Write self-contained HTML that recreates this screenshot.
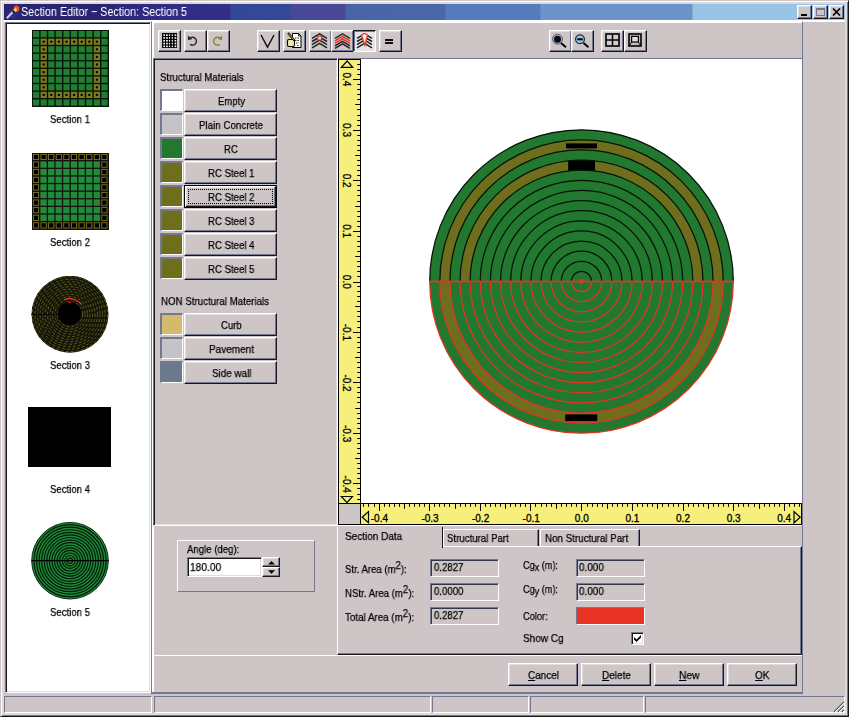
<!DOCTYPE html><html><head><meta charset="utf-8"><title>Section Editor</title><style>
*{box-sizing:border-box;margin:0;padding:0}
html,body{width:850px;height:717px;overflow:hidden;background:#cec5c7}
body{position:relative;font-family:"Liberation Sans",sans-serif;font-size:11px;color:#000;line-height:13px}
.a{position:absolute}
.t{position:absolute;white-space:nowrap;font-size:11px;line-height:13px;transform-origin:0 0;will-change:transform;-webkit-text-stroke:0.25px #000}
.btn{position:absolute;background:#cec5c7;border:1px solid;border-color:#ffffff #16161e #16161e #ffffff;box-shadow:inset -1px -1px 0 #737890, inset 1px 1px 0 #e2dcdd}
.tb{position:absolute;width:23px;height:22px;background:#cec5c7;border:1px solid;border-color:#ffffff #16161e #16161e #ffffff;box-shadow:inset -1px -1px 0 #737890, inset 1px 1px 0 #e2dcdd}
.sunk{position:absolute;border:1px solid;border-color:#737890 #ffffff #ffffff #737890;box-shadow:inset 1px 1px 0 #16161e, inset -1px -1px 0 #e2dcdd}
.sw{position:absolute;width:23px;height:22px;border-style:solid;border-width:2px 1px 1px 2px;border-color:#737890 #ffffff #ffffff #737890}
.fld{position:absolute;height:18px;border:1px solid;border-color:#737890 #ffffff #ffffff #737890;box-shadow:inset 1px 1px 0 #34364a;background:#cec5c7}
.sb{position:absolute;top:696px;height:17px;border:1px solid;border-color:#737890 #ffffff #ffffff #737890}
u{text-decoration:underline}
sup{font-size:11px;vertical-align:baseline;position:relative;top:-4px}
</style></head><body>
<div class="a" style="left:0;top:0;width:849px;height:717px;border:1px solid;border-color:#cec5c7 #16161e #16161e #cec5c7;box-shadow:inset 1px 1px 0 #ffffff, inset -1px -1px 0 #737890"></div><div class="a" style="left:849px;top:0;width:1px;height:717px;background:#fff"></div>
<div class="a" style="left:2px;top:2px;width:845px;height:713px;border:2px solid #dedad9"></div>
<div class="a" style="left:4px;top:20px;width:841px;height:2px;background:#fff"></div>
<div class="a" style="left:4px;top:4px;width:841px;height:16px;background:linear-gradient(90deg,#2a2470 0px,#2a2470 96px,#302c84 150px,#332f88 226px,#324896 227px,#344a98 286px,#484896 287px,#484896 341px,#4864a5 342px,#4a68a8 441px,#527cbc 442px,#527cbc 536px,#6c94cc 537px,#6c94cc 688px,#98c4e8 689px,#98c4e8 841px)"></div>
<svg class="a" style="left:5px;top:4px" width="16" height="16" viewBox="0 0 16 16"><path d="M3 9 L8 4 L14 9 L9 15 L4 14Z" fill="#2a2c90"/><path d="M1.8 14.2 L7.8 8" stroke="#c8c8d0" stroke-width="2.3"/><path d="M8 8.6 L9.5 7" stroke="#101018" stroke-width="2.3"/><path d="M8.2 6.5 L9 3 L11.5 0.8 L12 2.8 L13.6 2 L14.4 5 L13 7.5 L10.5 8.2Z" fill="#f05a28"/><path d="M9 6.3 L10 4 L11.8 5 L11.2 7.2 L9.8 7.5Z" fill="#ffd830"/></svg>
<div class="t" style="left:21px;top:4px;transform:scaleX(0.8609);color:#fff;font-size:12.5px;line-height:16px;-webkit-text-stroke:0">Section Editor − Section: Section 5</div>
<div class="btn" style="left:797px;top:5px;width:15px;height:14px"></div>
<div class="btn" style="left:813px;top:5px;width:15px;height:14px"></div>
<div class="btn" style="left:829px;top:5px;width:15px;height:14px"></div>
<div class="a" style="left:801px;top:14px;width:6px;height:2px;background:#000"></div>
<div class="a" style="left:816px;top:8px;width:9px;height:8px;border:1px solid #737890;border-top-width:2px"></div>
<svg class="a" style="left:832px;top:8px" width="9" height="8" viewBox="0 0 9 8"><path d="M1 0.5 L8 7.5 M8 0.5 L1 7.5" stroke="#000" stroke-width="1.6"/></svg>
<div class="sunk" style="left:5px;top:22px;width:146px;height:671px;background:#fff"></div>
<svg class="a" style="left:31.5px;top:29.5px" width="77" height="77" viewBox="0 0 78 78"><rect width="78" height="78" fill="#07140a"/><rect x="1.0" y="1.0" width="6.3" height="6.3" fill="#227c32"/><rect x="8.7" y="1.0" width="6.3" height="6.3" fill="#227c32"/><rect x="16.4" y="1.0" width="6.3" height="6.3" fill="#227c32"/><rect x="24.1" y="1.0" width="6.3" height="6.3" fill="#227c32"/><rect x="31.8" y="1.0" width="6.3" height="6.3" fill="#227c32"/><rect x="39.5" y="1.0" width="6.3" height="6.3" fill="#227c32"/><rect x="47.2" y="1.0" width="6.3" height="6.3" fill="#227c32"/><rect x="54.9" y="1.0" width="6.3" height="6.3" fill="#227c32"/><rect x="62.6" y="1.0" width="6.3" height="6.3" fill="#227c32"/><rect x="70.3" y="1.0" width="6.3" height="6.3" fill="#227c32"/><rect x="1.0" y="8.7" width="6.3" height="6.3" fill="#227c32"/><rect x="8.7" y="8.7" width="6.3" height="6.3" fill="#7d7a1e"/><rect x="10.8" y="10.8" width="2.1" height="2.1" fill="#000"/><rect x="16.4" y="8.7" width="6.3" height="6.3" fill="#7d7a1e"/><rect x="18.5" y="10.8" width="2.1" height="2.1" fill="#000"/><rect x="24.1" y="8.7" width="6.3" height="6.3" fill="#7d7a1e"/><rect x="26.2" y="10.8" width="2.1" height="2.1" fill="#000"/><rect x="31.8" y="8.7" width="6.3" height="6.3" fill="#7d7a1e"/><rect x="33.9" y="10.8" width="2.1" height="2.1" fill="#000"/><rect x="39.5" y="8.7" width="6.3" height="6.3" fill="#7d7a1e"/><rect x="41.6" y="10.8" width="2.1" height="2.1" fill="#000"/><rect x="47.2" y="8.7" width="6.3" height="6.3" fill="#7d7a1e"/><rect x="49.3" y="10.8" width="2.1" height="2.1" fill="#000"/><rect x="54.9" y="8.7" width="6.3" height="6.3" fill="#7d7a1e"/><rect x="57.0" y="10.8" width="2.1" height="2.1" fill="#000"/><rect x="62.6" y="8.7" width="6.3" height="6.3" fill="#7d7a1e"/><rect x="64.7" y="10.8" width="2.1" height="2.1" fill="#000"/><rect x="70.3" y="8.7" width="6.3" height="6.3" fill="#227c32"/><rect x="1.0" y="16.4" width="6.3" height="6.3" fill="#227c32"/><rect x="8.7" y="16.4" width="6.3" height="6.3" fill="#7d7a1e"/><rect x="10.8" y="18.5" width="2.1" height="2.1" fill="#000"/><rect x="16.4" y="16.4" width="6.3" height="6.3" fill="#227c32"/><rect x="24.1" y="16.4" width="6.3" height="6.3" fill="#227c32"/><rect x="31.8" y="16.4" width="6.3" height="6.3" fill="#227c32"/><rect x="39.5" y="16.4" width="6.3" height="6.3" fill="#227c32"/><rect x="47.2" y="16.4" width="6.3" height="6.3" fill="#227c32"/><rect x="54.9" y="16.4" width="6.3" height="6.3" fill="#227c32"/><rect x="62.6" y="16.4" width="6.3" height="6.3" fill="#7d7a1e"/><rect x="64.7" y="18.5" width="2.1" height="2.1" fill="#000"/><rect x="70.3" y="16.4" width="6.3" height="6.3" fill="#227c32"/><rect x="1.0" y="24.1" width="6.3" height="6.3" fill="#227c32"/><rect x="8.7" y="24.1" width="6.3" height="6.3" fill="#7d7a1e"/><rect x="10.8" y="26.2" width="2.1" height="2.1" fill="#000"/><rect x="16.4" y="24.1" width="6.3" height="6.3" fill="#227c32"/><rect x="24.1" y="24.1" width="6.3" height="6.3" fill="#227c32"/><rect x="31.8" y="24.1" width="6.3" height="6.3" fill="#227c32"/><rect x="39.5" y="24.1" width="6.3" height="6.3" fill="#227c32"/><rect x="47.2" y="24.1" width="6.3" height="6.3" fill="#227c32"/><rect x="54.9" y="24.1" width="6.3" height="6.3" fill="#227c32"/><rect x="62.6" y="24.1" width="6.3" height="6.3" fill="#7d7a1e"/><rect x="64.7" y="26.2" width="2.1" height="2.1" fill="#000"/><rect x="70.3" y="24.1" width="6.3" height="6.3" fill="#227c32"/><rect x="1.0" y="31.8" width="6.3" height="6.3" fill="#227c32"/><rect x="8.7" y="31.8" width="6.3" height="6.3" fill="#7d7a1e"/><rect x="10.8" y="33.9" width="2.1" height="2.1" fill="#000"/><rect x="16.4" y="31.8" width="6.3" height="6.3" fill="#227c32"/><rect x="24.1" y="31.8" width="6.3" height="6.3" fill="#227c32"/><rect x="31.8" y="31.8" width="6.3" height="6.3" fill="#227c32"/><rect x="39.5" y="31.8" width="6.3" height="6.3" fill="#227c32"/><rect x="47.2" y="31.8" width="6.3" height="6.3" fill="#227c32"/><rect x="54.9" y="31.8" width="6.3" height="6.3" fill="#227c32"/><rect x="62.6" y="31.8" width="6.3" height="6.3" fill="#7d7a1e"/><rect x="64.7" y="33.9" width="2.1" height="2.1" fill="#000"/><rect x="70.3" y="31.8" width="6.3" height="6.3" fill="#227c32"/><rect x="1.0" y="39.5" width="6.3" height="6.3" fill="#227c32"/><rect x="8.7" y="39.5" width="6.3" height="6.3" fill="#7d7a1e"/><rect x="10.8" y="41.6" width="2.1" height="2.1" fill="#000"/><rect x="16.4" y="39.5" width="6.3" height="6.3" fill="#227c32"/><rect x="24.1" y="39.5" width="6.3" height="6.3" fill="#227c32"/><rect x="31.8" y="39.5" width="6.3" height="6.3" fill="#227c32"/><rect x="39.5" y="39.5" width="6.3" height="6.3" fill="#227c32"/><rect x="47.2" y="39.5" width="6.3" height="6.3" fill="#227c32"/><rect x="54.9" y="39.5" width="6.3" height="6.3" fill="#227c32"/><rect x="62.6" y="39.5" width="6.3" height="6.3" fill="#7d7a1e"/><rect x="64.7" y="41.6" width="2.1" height="2.1" fill="#000"/><rect x="70.3" y="39.5" width="6.3" height="6.3" fill="#227c32"/><rect x="1.0" y="47.2" width="6.3" height="6.3" fill="#227c32"/><rect x="8.7" y="47.2" width="6.3" height="6.3" fill="#7d7a1e"/><rect x="10.8" y="49.3" width="2.1" height="2.1" fill="#000"/><rect x="16.4" y="47.2" width="6.3" height="6.3" fill="#227c32"/><rect x="24.1" y="47.2" width="6.3" height="6.3" fill="#227c32"/><rect x="31.8" y="47.2" width="6.3" height="6.3" fill="#227c32"/><rect x="39.5" y="47.2" width="6.3" height="6.3" fill="#227c32"/><rect x="47.2" y="47.2" width="6.3" height="6.3" fill="#227c32"/><rect x="54.9" y="47.2" width="6.3" height="6.3" fill="#227c32"/><rect x="62.6" y="47.2" width="6.3" height="6.3" fill="#7d7a1e"/><rect x="64.7" y="49.3" width="2.1" height="2.1" fill="#000"/><rect x="70.3" y="47.2" width="6.3" height="6.3" fill="#227c32"/><rect x="1.0" y="54.9" width="6.3" height="6.3" fill="#227c32"/><rect x="8.7" y="54.9" width="6.3" height="6.3" fill="#7d7a1e"/><rect x="10.8" y="57.0" width="2.1" height="2.1" fill="#000"/><rect x="16.4" y="54.9" width="6.3" height="6.3" fill="#227c32"/><rect x="24.1" y="54.9" width="6.3" height="6.3" fill="#227c32"/><rect x="31.8" y="54.9" width="6.3" height="6.3" fill="#227c32"/><rect x="39.5" y="54.9" width="6.3" height="6.3" fill="#227c32"/><rect x="47.2" y="54.9" width="6.3" height="6.3" fill="#227c32"/><rect x="54.9" y="54.9" width="6.3" height="6.3" fill="#227c32"/><rect x="62.6" y="54.9" width="6.3" height="6.3" fill="#7d7a1e"/><rect x="64.7" y="57.0" width="2.1" height="2.1" fill="#000"/><rect x="70.3" y="54.9" width="6.3" height="6.3" fill="#227c32"/><rect x="1.0" y="62.6" width="6.3" height="6.3" fill="#227c32"/><rect x="8.7" y="62.6" width="6.3" height="6.3" fill="#7d7a1e"/><rect x="10.8" y="64.7" width="2.1" height="2.1" fill="#000"/><rect x="16.4" y="62.6" width="6.3" height="6.3" fill="#7d7a1e"/><rect x="18.5" y="64.7" width="2.1" height="2.1" fill="#000"/><rect x="24.1" y="62.6" width="6.3" height="6.3" fill="#7d7a1e"/><rect x="26.2" y="64.7" width="2.1" height="2.1" fill="#000"/><rect x="31.8" y="62.6" width="6.3" height="6.3" fill="#7d7a1e"/><rect x="33.9" y="64.7" width="2.1" height="2.1" fill="#000"/><rect x="39.5" y="62.6" width="6.3" height="6.3" fill="#7d7a1e"/><rect x="41.6" y="64.7" width="2.1" height="2.1" fill="#000"/><rect x="47.2" y="62.6" width="6.3" height="6.3" fill="#7d7a1e"/><rect x="49.3" y="64.7" width="2.1" height="2.1" fill="#000"/><rect x="54.9" y="62.6" width="6.3" height="6.3" fill="#7d7a1e"/><rect x="57.0" y="64.7" width="2.1" height="2.1" fill="#000"/><rect x="62.6" y="62.6" width="6.3" height="6.3" fill="#7d7a1e"/><rect x="64.7" y="64.7" width="2.1" height="2.1" fill="#000"/><rect x="70.3" y="62.6" width="6.3" height="6.3" fill="#227c32"/><rect x="1.0" y="70.3" width="6.3" height="6.3" fill="#227c32"/><rect x="8.7" y="70.3" width="6.3" height="6.3" fill="#227c32"/><rect x="16.4" y="70.3" width="6.3" height="6.3" fill="#227c32"/><rect x="24.1" y="70.3" width="6.3" height="6.3" fill="#227c32"/><rect x="31.8" y="70.3" width="6.3" height="6.3" fill="#227c32"/><rect x="39.5" y="70.3" width="6.3" height="6.3" fill="#227c32"/><rect x="47.2" y="70.3" width="6.3" height="6.3" fill="#227c32"/><rect x="54.9" y="70.3" width="6.3" height="6.3" fill="#227c32"/><rect x="62.6" y="70.3" width="6.3" height="6.3" fill="#227c32"/><rect x="70.3" y="70.3" width="6.3" height="6.3" fill="#227c32"/></svg>
<svg class="a" style="left:31.5px;top:153px" width="77" height="77" viewBox="0 0 78 78"><rect width="78" height="78" fill="#15130a"/><rect x="1.4" y="1.4" width="5.3" height="5.3" fill="#000" stroke="#8c8426" stroke-width="0.8"/><rect x="9.1" y="1.4" width="5.3" height="5.3" fill="#000" stroke="#8c8426" stroke-width="0.8"/><rect x="16.8" y="1.4" width="5.3" height="5.3" fill="#000" stroke="#8c8426" stroke-width="0.8"/><rect x="24.5" y="1.4" width="5.3" height="5.3" fill="#000" stroke="#8c8426" stroke-width="0.8"/><rect x="32.2" y="1.4" width="5.3" height="5.3" fill="#000" stroke="#8c8426" stroke-width="0.8"/><rect x="39.9" y="1.4" width="5.3" height="5.3" fill="#000" stroke="#8c8426" stroke-width="0.8"/><rect x="47.6" y="1.4" width="5.3" height="5.3" fill="#000" stroke="#8c8426" stroke-width="0.8"/><rect x="55.3" y="1.4" width="5.3" height="5.3" fill="#000" stroke="#8c8426" stroke-width="0.8"/><rect x="63.0" y="1.4" width="5.3" height="5.3" fill="#000" stroke="#8c8426" stroke-width="0.8"/><rect x="70.7" y="1.4" width="5.3" height="5.3" fill="#000" stroke="#8c8426" stroke-width="0.8"/><rect x="1.4" y="9.1" width="5.3" height="5.3" fill="#000" stroke="#8c8426" stroke-width="0.8"/><rect x="8.5" y="8.5" width="6.4" height="6.4" fill="#228a3c"/><rect x="16.2" y="8.5" width="6.4" height="6.4" fill="#228a3c"/><rect x="23.9" y="8.5" width="6.4" height="6.4" fill="#228a3c"/><rect x="31.6" y="8.5" width="6.4" height="6.4" fill="#228a3c"/><rect x="39.3" y="8.5" width="6.4" height="6.4" fill="#228a3c"/><rect x="47.0" y="8.5" width="6.4" height="6.4" fill="#228a3c"/><rect x="54.7" y="8.5" width="6.4" height="6.4" fill="#228a3c"/><rect x="62.4" y="8.5" width="6.4" height="6.4" fill="#228a3c"/><rect x="70.7" y="9.1" width="5.3" height="5.3" fill="#000" stroke="#8c8426" stroke-width="0.8"/><rect x="1.4" y="16.8" width="5.3" height="5.3" fill="#000" stroke="#8c8426" stroke-width="0.8"/><rect x="8.5" y="16.2" width="6.4" height="6.4" fill="#228a3c"/><rect x="16.2" y="16.2" width="6.4" height="6.4" fill="#228a3c"/><rect x="23.9" y="16.2" width="6.4" height="6.4" fill="#228a3c"/><rect x="31.6" y="16.2" width="6.4" height="6.4" fill="#228a3c"/><rect x="39.3" y="16.2" width="6.4" height="6.4" fill="#228a3c"/><rect x="47.0" y="16.2" width="6.4" height="6.4" fill="#228a3c"/><rect x="54.7" y="16.2" width="6.4" height="6.4" fill="#228a3c"/><rect x="62.4" y="16.2" width="6.4" height="6.4" fill="#228a3c"/><rect x="70.7" y="16.8" width="5.3" height="5.3" fill="#000" stroke="#8c8426" stroke-width="0.8"/><rect x="1.4" y="24.5" width="5.3" height="5.3" fill="#000" stroke="#8c8426" stroke-width="0.8"/><rect x="8.5" y="23.9" width="6.4" height="6.4" fill="#228a3c"/><rect x="16.2" y="23.9" width="6.4" height="6.4" fill="#228a3c"/><rect x="23.9" y="23.9" width="6.4" height="6.4" fill="#228a3c"/><rect x="31.6" y="23.9" width="6.4" height="6.4" fill="#228a3c"/><rect x="39.3" y="23.9" width="6.4" height="6.4" fill="#228a3c"/><rect x="47.0" y="23.9" width="6.4" height="6.4" fill="#228a3c"/><rect x="54.7" y="23.9" width="6.4" height="6.4" fill="#228a3c"/><rect x="62.4" y="23.9" width="6.4" height="6.4" fill="#228a3c"/><rect x="70.7" y="24.5" width="5.3" height="5.3" fill="#000" stroke="#8c8426" stroke-width="0.8"/><rect x="1.4" y="32.2" width="5.3" height="5.3" fill="#000" stroke="#8c8426" stroke-width="0.8"/><rect x="8.5" y="31.6" width="6.4" height="6.4" fill="#228a3c"/><rect x="16.2" y="31.6" width="6.4" height="6.4" fill="#228a3c"/><rect x="23.9" y="31.6" width="6.4" height="6.4" fill="#228a3c"/><rect x="31.6" y="31.6" width="6.4" height="6.4" fill="#228a3c"/><rect x="39.3" y="31.6" width="6.4" height="6.4" fill="#228a3c"/><rect x="47.0" y="31.6" width="6.4" height="6.4" fill="#228a3c"/><rect x="54.7" y="31.6" width="6.4" height="6.4" fill="#228a3c"/><rect x="62.4" y="31.6" width="6.4" height="6.4" fill="#228a3c"/><rect x="70.7" y="32.2" width="5.3" height="5.3" fill="#000" stroke="#8c8426" stroke-width="0.8"/><rect x="1.4" y="39.9" width="5.3" height="5.3" fill="#000" stroke="#8c8426" stroke-width="0.8"/><rect x="8.5" y="39.3" width="6.4" height="6.4" fill="#228a3c"/><rect x="16.2" y="39.3" width="6.4" height="6.4" fill="#228a3c"/><rect x="23.9" y="39.3" width="6.4" height="6.4" fill="#228a3c"/><rect x="31.6" y="39.3" width="6.4" height="6.4" fill="#228a3c"/><rect x="39.3" y="39.3" width="6.4" height="6.4" fill="#228a3c"/><rect x="47.0" y="39.3" width="6.4" height="6.4" fill="#228a3c"/><rect x="54.7" y="39.3" width="6.4" height="6.4" fill="#228a3c"/><rect x="62.4" y="39.3" width="6.4" height="6.4" fill="#228a3c"/><rect x="70.7" y="39.9" width="5.3" height="5.3" fill="#000" stroke="#8c8426" stroke-width="0.8"/><rect x="1.4" y="47.6" width="5.3" height="5.3" fill="#000" stroke="#8c8426" stroke-width="0.8"/><rect x="8.5" y="47.0" width="6.4" height="6.4" fill="#228a3c"/><rect x="16.2" y="47.0" width="6.4" height="6.4" fill="#228a3c"/><rect x="23.9" y="47.0" width="6.4" height="6.4" fill="#228a3c"/><rect x="31.6" y="47.0" width="6.4" height="6.4" fill="#228a3c"/><rect x="39.3" y="47.0" width="6.4" height="6.4" fill="#228a3c"/><rect x="47.0" y="47.0" width="6.4" height="6.4" fill="#228a3c"/><rect x="54.7" y="47.0" width="6.4" height="6.4" fill="#228a3c"/><rect x="62.4" y="47.0" width="6.4" height="6.4" fill="#228a3c"/><rect x="70.7" y="47.6" width="5.3" height="5.3" fill="#000" stroke="#8c8426" stroke-width="0.8"/><rect x="1.4" y="55.3" width="5.3" height="5.3" fill="#000" stroke="#8c8426" stroke-width="0.8"/><rect x="8.5" y="54.7" width="6.4" height="6.4" fill="#228a3c"/><rect x="16.2" y="54.7" width="6.4" height="6.4" fill="#228a3c"/><rect x="23.9" y="54.7" width="6.4" height="6.4" fill="#228a3c"/><rect x="31.6" y="54.7" width="6.4" height="6.4" fill="#228a3c"/><rect x="39.3" y="54.7" width="6.4" height="6.4" fill="#228a3c"/><rect x="47.0" y="54.7" width="6.4" height="6.4" fill="#228a3c"/><rect x="54.7" y="54.7" width="6.4" height="6.4" fill="#228a3c"/><rect x="62.4" y="54.7" width="6.4" height="6.4" fill="#228a3c"/><rect x="70.7" y="55.3" width="5.3" height="5.3" fill="#000" stroke="#8c8426" stroke-width="0.8"/><rect x="1.4" y="63.0" width="5.3" height="5.3" fill="#000" stroke="#8c8426" stroke-width="0.8"/><rect x="8.5" y="62.4" width="6.4" height="6.4" fill="#228a3c"/><rect x="16.2" y="62.4" width="6.4" height="6.4" fill="#228a3c"/><rect x="23.9" y="62.4" width="6.4" height="6.4" fill="#228a3c"/><rect x="31.6" y="62.4" width="6.4" height="6.4" fill="#228a3c"/><rect x="39.3" y="62.4" width="6.4" height="6.4" fill="#228a3c"/><rect x="47.0" y="62.4" width="6.4" height="6.4" fill="#228a3c"/><rect x="54.7" y="62.4" width="6.4" height="6.4" fill="#228a3c"/><rect x="62.4" y="62.4" width="6.4" height="6.4" fill="#228a3c"/><rect x="70.7" y="63.0" width="5.3" height="5.3" fill="#000" stroke="#8c8426" stroke-width="0.8"/><rect x="1.4" y="70.7" width="5.3" height="5.3" fill="#000" stroke="#8c8426" stroke-width="0.8"/><rect x="9.1" y="70.7" width="5.3" height="5.3" fill="#000" stroke="#8c8426" stroke-width="0.8"/><rect x="16.8" y="70.7" width="5.3" height="5.3" fill="#000" stroke="#8c8426" stroke-width="0.8"/><rect x="24.5" y="70.7" width="5.3" height="5.3" fill="#000" stroke="#8c8426" stroke-width="0.8"/><rect x="32.2" y="70.7" width="5.3" height="5.3" fill="#000" stroke="#8c8426" stroke-width="0.8"/><rect x="39.9" y="70.7" width="5.3" height="5.3" fill="#000" stroke="#8c8426" stroke-width="0.8"/><rect x="47.6" y="70.7" width="5.3" height="5.3" fill="#000" stroke="#8c8426" stroke-width="0.8"/><rect x="55.3" y="70.7" width="5.3" height="5.3" fill="#000" stroke="#8c8426" stroke-width="0.8"/><rect x="63.0" y="70.7" width="5.3" height="5.3" fill="#000" stroke="#8c8426" stroke-width="0.8"/><rect x="70.7" y="70.7" width="5.3" height="5.3" fill="#000" stroke="#8c8426" stroke-width="0.8"/></svg>
<svg class="a" style="left:31px;top:276px" width="78" height="78" viewBox="0 0 78 78"><circle cx="39" cy="38.2" r="38.5" fill="#15150a"/><circle cx="39" cy="38.2" r="7.5" fill="none" stroke="#74741c" stroke-width="0.75" stroke-dasharray="3 2"/><circle cx="39" cy="38.2" r="10.0" fill="none" stroke="#74741c" stroke-width="0.75" stroke-dasharray="3 2"/><circle cx="39" cy="38.2" r="12.5" fill="none" stroke="#74741c" stroke-width="0.75" stroke-dasharray="3 2"/><circle cx="39" cy="38.2" r="15.0" fill="none" stroke="#74741c" stroke-width="0.75" stroke-dasharray="3 2"/><circle cx="39" cy="38.2" r="17.5" fill="none" stroke="#74741c" stroke-width="0.75" stroke-dasharray="3 2"/><circle cx="39" cy="38.2" r="20.0" fill="none" stroke="#74741c" stroke-width="0.75" stroke-dasharray="3 2"/><circle cx="39" cy="38.2" r="22.5" fill="none" stroke="#74741c" stroke-width="0.75" stroke-dasharray="3 2"/><circle cx="39" cy="38.2" r="25.0" fill="none" stroke="#74741c" stroke-width="0.75" stroke-dasharray="3 2"/><circle cx="39" cy="38.2" r="27.5" fill="none" stroke="#74741c" stroke-width="0.75" stroke-dasharray="3 2"/><circle cx="39" cy="38.2" r="30.0" fill="none" stroke="#74741c" stroke-width="0.75" stroke-dasharray="3 2"/><circle cx="39" cy="38.2" r="32.5" fill="none" stroke="#74741c" stroke-width="0.75" stroke-dasharray="3 2"/><circle cx="39" cy="38.2" r="35.0" fill="none" stroke="#74741c" stroke-width="0.75" stroke-dasharray="3 2"/><circle cx="39" cy="38.2" r="37.5" fill="none" stroke="#74741c" stroke-width="0.75" stroke-dasharray="3 2"/><circle cx="38.5" cy="37.3" r="11.6" fill="#000"/><path d="M32.9 24 Q40 19 51 28.5" fill="none" stroke="#e63323" stroke-width="1.2"/><path d="M37.5 26.4 H40" stroke="#e63323" stroke-width="1"/><path d="M0 38.5 H27" stroke="#000" stroke-width="0.8"/></svg>
<div class="a" style="left:28px;top:407px;width:83px;height:60px;background:#000"></div>
<svg class="a" style="left:31px;top:522px" width="78" height="78" viewBox="0 0 78 78"><circle cx="39" cy="38.7" r="38.3" fill="#1f8a36" stroke="#0a2a12" stroke-width="1"/><circle cx="39" cy="38.7" r="2.58" fill="none" stroke="#04180a" stroke-width="1.15"/><circle cx="39" cy="38.7" r="5.16" fill="none" stroke="#04180a" stroke-width="1.15"/><circle cx="39" cy="38.7" r="7.74" fill="none" stroke="#04180a" stroke-width="1.15"/><circle cx="39" cy="38.7" r="10.32" fill="none" stroke="#04180a" stroke-width="1.15"/><circle cx="39" cy="38.7" r="12.90" fill="none" stroke="#04180a" stroke-width="1.15"/><circle cx="39" cy="38.7" r="15.48" fill="none" stroke="#04180a" stroke-width="1.15"/><circle cx="39" cy="38.7" r="18.06" fill="none" stroke="#04180a" stroke-width="1.15"/><circle cx="39" cy="38.7" r="20.64" fill="none" stroke="#04180a" stroke-width="1.15"/><circle cx="39" cy="38.7" r="23.22" fill="none" stroke="#04180a" stroke-width="1.15"/><circle cx="39" cy="38.7" r="25.80" fill="none" stroke="#04180a" stroke-width="1.15"/><circle cx="39" cy="38.7" r="28.38" fill="none" stroke="#04180a" stroke-width="1.15"/><circle cx="39" cy="38.7" r="30.96" fill="none" stroke="#04180a" stroke-width="1.15"/><circle cx="39" cy="38.7" r="33.54" fill="none" stroke="#04180a" stroke-width="1.15"/><circle cx="39" cy="38.7" r="36.12" fill="none" stroke="#04180a" stroke-width="1.15"/><path d="M0.5 38.7 H77.5" stroke="#000" stroke-width="1.2"/></svg>
<div class="t" style="left:49.6px;top:113px;transform:scaleX(0.8719);">Section 1</div>
<div class="t" style="left:49.6px;top:236px;transform:scaleX(0.8719);">Section 2</div>
<div class="t" style="left:49.6px;top:359px;transform:scaleX(0.8719);">Section 3</div>
<div class="t" style="left:49.6px;top:483px;transform:scaleX(0.8719);">Section 4</div>
<div class="t" style="left:49.6px;top:606px;transform:scaleX(0.8719);">Section 5</div>
<div class="a" style="left:151px;top:21px;width:652px;height:673px;border:1px solid;border-bottom-width:2px;border-color:#ffffff #737890 #737890 #737890;box-shadow:inset 2px 1px 0 #ffffff"></div>
<div class="tb" style="left:158px;top:30px"></div>
<div class="tb" style="left:184px;top:30px"></div>
<div class="tb" style="left:207px;top:30px"></div>
<div class="tb" style="left:257px;top:30px"></div>
<div class="tb" style="left:283px;top:30px"></div>
<div class="tb" style="left:309px;top:30px"></div>
<div class="tb" style="left:331px;top:30px"></div>
<div class="tb" style="left:379px;top:30px"></div>
<div class="tb" style="left:549px;top:30px"></div>
<div class="tb" style="left:571px;top:30px"></div>
<div class="tb" style="left:601px;top:30px"></div>
<div class="tb" style="left:624px;top:30px"></div>
<div class="a" style="left:353px;top:30px;width:23px;height:22px;background:#e8e4e3;border:1px solid;border-color:#16161e #ffffff #ffffff #16161e;box-shadow:inset 1px 1px 0 #737890"></div>
<svg class="a" style="left:162px;top:33px" width="15" height="15" viewBox="0 0 15 15"><rect width="15" height="15" fill="#000"/><rect x="1.30" y="1.30" width="1.7" height="1.6" fill="#ffffff"/><rect x="4.12" y="1.30" width="1.7" height="1.6" fill="#ffffff"/><rect x="6.94" y="1.30" width="1.2" height="1.6" fill="#ffffff"/><rect x="9.76" y="1.30" width="1.2" height="1.6" fill="#ffffff"/><rect x="12.58" y="1.30" width="1.7" height="1.6" fill="#ffffff"/><rect x="1.30" y="4.12" width="1.7" height="1.6" fill="#ffffff"/><rect x="4.12" y="4.12" width="1.7" height="1.6" fill="#ffffff"/><rect x="6.94" y="4.12" width="1.2" height="1.6" fill="#ffffff"/><rect x="9.76" y="4.12" width="1.2" height="1.6" fill="#ffffff"/><rect x="12.58" y="4.12" width="1.7" height="1.6" fill="#ffffff"/><rect x="1.30" y="6.94" width="1.7" height="1.6" fill="#ffffff"/><rect x="4.12" y="6.94" width="1.7" height="1.6" fill="#ffffff"/><rect x="6.94" y="6.94" width="1.2" height="1.6" fill="#ffffff"/><rect x="9.76" y="6.94" width="1.2" height="1.6" fill="#ffffff"/><rect x="12.58" y="6.94" width="1.7" height="1.6" fill="#ffffff"/><rect x="1.30" y="9.76" width="1.7" height="1.6" fill="#ffffff"/><rect x="4.12" y="9.76" width="1.7" height="1.6" fill="#ffffff"/><rect x="6.94" y="9.76" width="1.2" height="1.6" fill="#ffffff"/><rect x="9.76" y="9.76" width="1.2" height="1.6" fill="#ffffff"/><rect x="12.58" y="9.76" width="1.7" height="1.6" fill="#ffffff"/><rect x="1.30" y="12.58" width="1.7" height="1.6" fill="#ffffff"/><rect x="4.12" y="12.58" width="1.7" height="1.6" fill="#ffffff"/><rect x="6.94" y="12.58" width="1.2" height="1.6" fill="#ffffff"/><rect x="9.76" y="12.58" width="1.2" height="1.6" fill="#ffffff"/><rect x="12.58" y="12.58" width="1.7" height="1.6" fill="#ffffff"/></svg>
<svg class="a" style="left:184px;top:29px" width="23" height="22" viewBox="184 29 23 22"><path d="M189.6 38.6 A3.9 3.9 0 1 1 190.2 44.4" fill="none" stroke="#26262a" stroke-width="1.5"/><path d="M187.8 35.6 L188 40 L192.3 39.2Z" fill="#26262a"/></svg>
<svg class="a" style="left:207px;top:29px" width="23" height="22" viewBox="207 29 23 22"><path d="M220.4 38.6 A3.9 3.9 0 1 0 219.8 44.4" fill="none" stroke="#8a8430" stroke-width="1.5"/><path d="M222.2 35.6 L222 40 L217.7 39.2Z" fill="#8a8430"/></svg>
<svg class="a" style="left:259.3px;top:32.6px" width="17" height="16" viewBox="0 0 17 16"><path d="M2 2 L8.5 14.2 L15 2" fill="none" stroke="#101010" stroke-width="1.4"/></svg>
<svg class="a" style="left:283px;top:29px" width="23" height="22" viewBox="283 29 23 22"><path d="M292.5 33.5 H298.5 L301 36 V47.5 H292.5Z" fill="#fff" stroke="#000" stroke-width="1"/><path d="M298.5 33.5 V36 H301" fill="none" stroke="#000" stroke-width="0.8"/><path d="M295 38H299M295 40.5H299M296 43H299M297 45.5H299" stroke="#303030" stroke-width="1" stroke-dasharray="1.5 1"/><rect x="287.5" y="39.5" width="7" height="7" rx="1.5" fill="#f0eca0" stroke="#000" stroke-width="1.1"/><path d="M288 33 L294.5 40.5" stroke="#000" stroke-width="2"/><path d="M288.5 33.5 L294 40" stroke="#e8c020" stroke-width="0.9"/></svg>
<svg class="a" style="left:311px;top:32px" width="17" height="17" viewBox="0 0 17 17"><path d="M1 6.3 L8.5 1.8 L16 6.3" fill="none" stroke="#202020" stroke-width="1.5"/><path d="M1 9.5 L8.5 5.0 L16 9.5" fill="none" stroke="#202020" stroke-width="1.5"/><path d="M1 12.700000000000001 L8.5 8.200000000000001 L16 12.700000000000001" fill="none" stroke="#202020" stroke-width="1.5"/><path d="M1 15.900000000000002 L8.5 11.400000000000002 L16 15.900000000000002" fill="none" stroke="#202020" stroke-width="1.5"/><rect x="6.7" y="4.2" width="3.8" height="3.8" fill="#f6d4cc" stroke="#e63323" stroke-width="1.1"/></svg>
<svg class="a" style="left:334px;top:32px" width="17" height="17" viewBox="0 0 17 17"><path d="M1 6.3 L8.5 1.8 L16 6.3" fill="none" stroke="#283038" stroke-width="1.5"/><path d="M1 8.8 L8.5 4.3 L16 8.8" fill="none" stroke="#e63323" stroke-width="1.5"/><path d="M1 11.3 L8.5 6.8 L16 11.3" fill="none" stroke="#e63323" stroke-width="1.5"/><path d="M1 13.8 L8.5 9.3 L16 13.8" fill="none" stroke="#202020" stroke-width="1.5"/><path d="M1 16.3 L8.5 11.8 L16 16.3" fill="none" stroke="#202020" stroke-width="1.5"/></svg>
<svg class="a" style="left:356px;top:32px" width="17" height="17" viewBox="0 0 17 17"><path d="M1 6.3 L8.5 1.8 L16 6.3" fill="none" stroke="#202020" stroke-width="1.5"/><path d="M1 9.5 L8.5 5.0 L16 9.5" fill="none" stroke="#202020" stroke-width="1.5"/><path d="M1 12.700000000000001 L8.5 8.200000000000001 L16 12.700000000000001" fill="none" stroke="#202020" stroke-width="1.5"/><path d="M1 15.900000000000002 L8.5 11.400000000000002 L16 15.900000000000002" fill="none" stroke="#202020" stroke-width="1.5"/><path d="M5.6 3.2 Q8.5 0 11.4 3.2 L9 13.5 Z" fill="#f4f0ee" stroke="#e63323" stroke-width="1.2"/></svg>
<div class="a" style="left:385px;top:39.2px;width:7.5px;height:1.6px;background:#101010"></div><div class="a" style="left:385px;top:42.2px;width:7.5px;height:1.6px;background:#101010"></div>
<svg class="a" style="left:549px;top:29px" width="23" height="22" viewBox="549 29 23 22"><circle cx="557.5" cy="39.2" r="4.2" fill="#080810" stroke="#88b4dc" stroke-width="1.4"/><circle cx="557.5" cy="39.2" r="5" fill="none" stroke="#202830" stroke-width="0.6"/><path d="M561 43 L566 47.2" stroke="#000" stroke-width="2"/></svg>
<svg class="a" style="left:571px;top:29px" width="23" height="22" viewBox="571 29 23 22"><circle cx="580" cy="39.2" r="4.4" fill="#98c4e8" stroke="#202830" stroke-width="1.2"/><path d="M583.5 43 L588.5 47.2" stroke="#000" stroke-width="2"/><path d="M577.2 39.3H582.8" stroke="#000" stroke-width="2"/></svg>
<svg class="a" style="left:605px;top:33px" width="15" height="14" viewBox="0 0 15 14"><rect x="1" y="1" width="13" height="12" fill="#d4cece" stroke="#000" stroke-width="1.6"/><path d="M7.5 1V13M1 7H14" stroke="#000" stroke-width="1.5"/></svg>
<svg class="a" style="left:628px;top:33px" width="14" height="14" viewBox="0 0 14 14"><rect x="1" y="1" width="12" height="12" fill="#c0bcbc" stroke="#000" stroke-width="1.6"/><rect x="3.6" y="3.4" width="6.8" height="5.6" fill="#e4e0e0" stroke="#000" stroke-width="1.2"/><path d="M1 13L3.8 9M13 13L10.2 9" stroke="#000" stroke-width="1"/></svg>
<div class="sunk" style="left:153px;top:58px;width:185px;height:468px"></div>
<div class="t" style="left:160.4px;top:71px;transform:scaleX(0.8822);">Structural Materials</div>
<div class="sw" style="left:160px;top:89px;background:#ffffff"></div>
<div class="btn" style="left:184px;top:89px;width:93px;height:23px"></div>
<div class="t" style="left:217.8px;top:95px;transform:scaleX(0.8657);">Empty</div>
<div class="sw" style="left:160px;top:113px;background:#c6c3c6"></div>
<div class="btn" style="left:184px;top:113px;width:93px;height:23px"></div>
<div class="t" style="left:199.3px;top:119px;transform:scaleX(0.8870);">Plain Concrete</div>
<div class="sw" style="left:160px;top:137px;background:#22782f"></div>
<div class="btn" style="left:184px;top:137px;width:93px;height:23px"></div>
<div class="t" style="left:224.4px;top:143px;transform:scaleX(0.8684);">RC</div>
<div class="sw" style="left:160px;top:161px;background:#6e6e1c"></div>
<div class="btn" style="left:184px;top:161px;width:93px;height:23px"></div>
<div class="t" style="left:208.1px;top:167px;transform:scaleX(0.8740);">RC Steel 1</div>
<div class="sw" style="left:160px;top:185px;background:#6e6e1c"></div>
<div class="a" style="left:184px;top:185px;width:93px;height:23px;border:1px solid #000"></div>
<div class="btn" style="left:185px;top:186px;width:91px;height:21px"></div>
<div class="a" style="left:188px;top:189px;width:85px;height:15px;border:1px dotted #000"></div>
<div class="t" style="left:208.1px;top:191px;transform:scaleX(0.8740);">RC Steel 2</div>
<div class="sw" style="left:160px;top:209px;background:#6e6e1c"></div>
<div class="btn" style="left:184px;top:209px;width:93px;height:23px"></div>
<div class="t" style="left:208.1px;top:215px;transform:scaleX(0.8740);">RC Steel 3</div>
<div class="sw" style="left:160px;top:233px;background:#6e6e1c"></div>
<div class="btn" style="left:184px;top:233px;width:93px;height:23px"></div>
<div class="t" style="left:208.1px;top:239px;transform:scaleX(0.8740);">RC Steel 4</div>
<div class="sw" style="left:160px;top:257px;background:#6e6e1c"></div>
<div class="btn" style="left:184px;top:257px;width:93px;height:23px"></div>
<div class="t" style="left:208.1px;top:263px;transform:scaleX(0.8740);">RC Steel 5</div>
<div class="t" style="left:160.8px;top:295px;transform:scaleX(0.8833);">NON Structural Materials</div>
<div class="sw" style="left:160px;top:313px;background:#d6ba6b"></div>
<div class="btn" style="left:184px;top:313px;width:93px;height:23px"></div>
<div class="t" style="left:221.0px;top:319px;transform:scaleX(0.8640);">Curb</div>
<div class="sw" style="left:160px;top:337px;background:#c6c3c6"></div>
<div class="btn" style="left:184px;top:337px;width:93px;height:23px"></div>
<div class="t" style="left:208.8px;top:343px;transform:scaleX(0.9085);">Pavement</div>
<div class="sw" style="left:160px;top:361px;background:#6b798c"></div>
<div class="btn" style="left:184px;top:361px;width:93px;height:23px"></div>
<div class="t" style="left:211.6px;top:367px;transform:scaleX(0.8948);">Side wall</div>
<svg class="a" style="left:338px;top:58px" width="464" height="467" viewBox="338 58 464 467" font-family="Liberation Sans, sans-serif"><rect x="338" y="58" width="465" height="467" fill="#cec5c7"/><rect x="338" y="58" width="465" height="1" fill="#737890"/><rect x="361" y="59" width="441" height="445" fill="#fff"/><rect x="338" y="59" width="23" height="445" fill="#000"/><rect x="339" y="60" width="21" height="443" fill="#f7ef7b"/><rect x="338" y="503" width="464" height="22" fill="#000"/><rect x="339" y="504" width="21" height="20" fill="#cec5c7"/><rect x="361" y="504" width="440" height="20" fill="#f7ef7b"/><rect x="363" y="504" width="1" height="2.8" fill="#000"/><rect x="357.2" y="499" width="2.8" height="1" fill="#000"/><rect x="368" y="504" width="1" height="2.8" fill="#000"/><rect x="357.2" y="494" width="2.8" height="1" fill="#000"/><rect x="374" y="504" width="1" height="2.8" fill="#000"/><rect x="357.2" y="488" width="2.8" height="1" fill="#000"/><rect x="379" y="504" width="1" height="7" fill="#000"/><rect x="353" y="483" width="7" height="1" fill="#000"/><rect x="384" y="504" width="1" height="2.8" fill="#000"/><rect x="357.2" y="478" width="2.8" height="1" fill="#000"/><rect x="389" y="504" width="1" height="2.8" fill="#000"/><rect x="357.2" y="473" width="2.8" height="1" fill="#000"/><rect x="394" y="504" width="1" height="2.8" fill="#000"/><rect x="357.2" y="468" width="2.8" height="1" fill="#000"/><rect x="399" y="504" width="1" height="2.8" fill="#000"/><rect x="357.2" y="463" width="2.8" height="1" fill="#000"/><rect x="404" y="504" width="1" height="4.7" fill="#000"/><rect x="355.3" y="458" width="4.7" height="1" fill="#000"/><rect x="409" y="504" width="1" height="2.8" fill="#000"/><rect x="357.2" y="453" width="2.8" height="1" fill="#000"/><rect x="414" y="504" width="1" height="2.8" fill="#000"/><rect x="357.2" y="448" width="2.8" height="1" fill="#000"/><rect x="419" y="504" width="1" height="2.8" fill="#000"/><rect x="357.2" y="443" width="2.8" height="1" fill="#000"/><rect x="424" y="504" width="1" height="2.8" fill="#000"/><rect x="357.2" y="438" width="2.8" height="1" fill="#000"/><rect x="429" y="504" width="1" height="7" fill="#000"/><rect x="353" y="433" width="7" height="1" fill="#000"/><rect x="434" y="504" width="1" height="2.8" fill="#000"/><rect x="357.2" y="428" width="2.8" height="1" fill="#000"/><rect x="439" y="504" width="1" height="2.8" fill="#000"/><rect x="357.2" y="423" width="2.8" height="1" fill="#000"/><rect x="444" y="504" width="1" height="2.8" fill="#000"/><rect x="357.2" y="418" width="2.8" height="1" fill="#000"/><rect x="449" y="504" width="1" height="2.8" fill="#000"/><rect x="357.2" y="413" width="2.8" height="1" fill="#000"/><rect x="455" y="504" width="1" height="4.7" fill="#000"/><rect x="355.3" y="408" width="4.7" height="1" fill="#000"/><rect x="460" y="504" width="1" height="2.8" fill="#000"/><rect x="357.2" y="402" width="2.8" height="1" fill="#000"/><rect x="465" y="504" width="1" height="2.8" fill="#000"/><rect x="357.2" y="397" width="2.8" height="1" fill="#000"/><rect x="470" y="504" width="1" height="2.8" fill="#000"/><rect x="357.2" y="392" width="2.8" height="1" fill="#000"/><rect x="475" y="504" width="1" height="2.8" fill="#000"/><rect x="357.2" y="387" width="2.8" height="1" fill="#000"/><rect x="480" y="504" width="1" height="7" fill="#000"/><rect x="353" y="382" width="7" height="1" fill="#000"/><rect x="485" y="504" width="1" height="2.8" fill="#000"/><rect x="357.2" y="377" width="2.8" height="1" fill="#000"/><rect x="490" y="504" width="1" height="2.8" fill="#000"/><rect x="357.2" y="372" width="2.8" height="1" fill="#000"/><rect x="495" y="504" width="1" height="2.8" fill="#000"/><rect x="357.2" y="367" width="2.8" height="1" fill="#000"/><rect x="500" y="504" width="1" height="2.8" fill="#000"/><rect x="357.2" y="362" width="2.8" height="1" fill="#000"/><rect x="505" y="504" width="1" height="4.7" fill="#000"/><rect x="355.3" y="357" width="4.7" height="1" fill="#000"/><rect x="510" y="504" width="1" height="2.8" fill="#000"/><rect x="357.2" y="352" width="2.8" height="1" fill="#000"/><rect x="515" y="504" width="1" height="2.8" fill="#000"/><rect x="357.2" y="347" width="2.8" height="1" fill="#000"/><rect x="520" y="504" width="1" height="2.8" fill="#000"/><rect x="357.2" y="342" width="2.8" height="1" fill="#000"/><rect x="525" y="504" width="1" height="2.8" fill="#000"/><rect x="357.2" y="337" width="2.8" height="1" fill="#000"/><rect x="530" y="504" width="1" height="7" fill="#000"/><rect x="353" y="332" width="7" height="1" fill="#000"/><rect x="535" y="504" width="1" height="2.8" fill="#000"/><rect x="357.2" y="327" width="2.8" height="1" fill="#000"/><rect x="541" y="504" width="1" height="2.8" fill="#000"/><rect x="357.2" y="321" width="2.8" height="1" fill="#000"/><rect x="546" y="504" width="1" height="2.8" fill="#000"/><rect x="357.2" y="316" width="2.8" height="1" fill="#000"/><rect x="551" y="504" width="1" height="2.8" fill="#000"/><rect x="357.2" y="311" width="2.8" height="1" fill="#000"/><rect x="556" y="504" width="1" height="4.7" fill="#000"/><rect x="355.3" y="306" width="4.7" height="1" fill="#000"/><rect x="561" y="504" width="1" height="2.8" fill="#000"/><rect x="357.2" y="301" width="2.8" height="1" fill="#000"/><rect x="566" y="504" width="1" height="2.8" fill="#000"/><rect x="357.2" y="296" width="2.8" height="1" fill="#000"/><rect x="571" y="504" width="1" height="2.8" fill="#000"/><rect x="357.2" y="291" width="2.8" height="1" fill="#000"/><rect x="576" y="504" width="1" height="2.8" fill="#000"/><rect x="357.2" y="286" width="2.8" height="1" fill="#000"/><rect x="581" y="504" width="1" height="7" fill="#000"/><rect x="353" y="282" width="7" height="1" fill="#000"/><rect x="587" y="504" width="1" height="2.8" fill="#000"/><rect x="357.2" y="276" width="2.8" height="1" fill="#000"/><rect x="592" y="504" width="1" height="2.8" fill="#000"/><rect x="357.2" y="271" width="2.8" height="1" fill="#000"/><rect x="597" y="504" width="1" height="2.8" fill="#000"/><rect x="357.2" y="266" width="2.8" height="1" fill="#000"/><rect x="602" y="504" width="1" height="2.8" fill="#000"/><rect x="357.2" y="261" width="2.8" height="1" fill="#000"/><rect x="607" y="504" width="1" height="4.7" fill="#000"/><rect x="355.3" y="256" width="4.7" height="1" fill="#000"/><rect x="612" y="504" width="1" height="2.8" fill="#000"/><rect x="357.2" y="251" width="2.8" height="1" fill="#000"/><rect x="617" y="504" width="1" height="2.8" fill="#000"/><rect x="357.2" y="246" width="2.8" height="1" fill="#000"/><rect x="622" y="504" width="1" height="2.8" fill="#000"/><rect x="357.2" y="241" width="2.8" height="1" fill="#000"/><rect x="627" y="504" width="1" height="2.8" fill="#000"/><rect x="357.2" y="236" width="2.8" height="1" fill="#000"/><rect x="632" y="504" width="1" height="7" fill="#000"/><rect x="353" y="231" width="7" height="1" fill="#000"/><rect x="637" y="504" width="1" height="2.8" fill="#000"/><rect x="357.2" y="226" width="2.8" height="1" fill="#000"/><rect x="642" y="504" width="1" height="2.8" fill="#000"/><rect x="357.2" y="221" width="2.8" height="1" fill="#000"/><rect x="647" y="504" width="1" height="2.8" fill="#000"/><rect x="357.2" y="216" width="2.8" height="1" fill="#000"/><rect x="652" y="504" width="1" height="2.8" fill="#000"/><rect x="357.2" y="211" width="2.8" height="1" fill="#000"/><rect x="657" y="504" width="1" height="4.7" fill="#000"/><rect x="355.3" y="206" width="4.7" height="1" fill="#000"/><rect x="662" y="504" width="1" height="2.8" fill="#000"/><rect x="357.2" y="201" width="2.8" height="1" fill="#000"/><rect x="668" y="504" width="1" height="2.8" fill="#000"/><rect x="357.2" y="195" width="2.8" height="1" fill="#000"/><rect x="673" y="504" width="1" height="2.8" fill="#000"/><rect x="357.2" y="190" width="2.8" height="1" fill="#000"/><rect x="678" y="504" width="1" height="2.8" fill="#000"/><rect x="357.2" y="185" width="2.8" height="1" fill="#000"/><rect x="683" y="504" width="1" height="7" fill="#000"/><rect x="353" y="180" width="7" height="1" fill="#000"/><rect x="688" y="504" width="1" height="2.8" fill="#000"/><rect x="357.2" y="175" width="2.8" height="1" fill="#000"/><rect x="693" y="504" width="1" height="2.8" fill="#000"/><rect x="357.2" y="170" width="2.8" height="1" fill="#000"/><rect x="698" y="504" width="1" height="2.8" fill="#000"/><rect x="357.2" y="165" width="2.8" height="1" fill="#000"/><rect x="703" y="504" width="1" height="2.8" fill="#000"/><rect x="357.2" y="160" width="2.8" height="1" fill="#000"/><rect x="708" y="504" width="1" height="4.7" fill="#000"/><rect x="355.3" y="155" width="4.7" height="1" fill="#000"/><rect x="713" y="504" width="1" height="2.8" fill="#000"/><rect x="357.2" y="150" width="2.8" height="1" fill="#000"/><rect x="718" y="504" width="1" height="2.8" fill="#000"/><rect x="357.2" y="145" width="2.8" height="1" fill="#000"/><rect x="723" y="504" width="1" height="2.8" fill="#000"/><rect x="357.2" y="140" width="2.8" height="1" fill="#000"/><rect x="728" y="504" width="1" height="2.8" fill="#000"/><rect x="357.2" y="135" width="2.8" height="1" fill="#000"/><rect x="733" y="504" width="1" height="7" fill="#000"/><rect x="353" y="130" width="7" height="1" fill="#000"/><rect x="738" y="504" width="1" height="2.8" fill="#000"/><rect x="357.2" y="125" width="2.8" height="1" fill="#000"/><rect x="743" y="504" width="1" height="2.8" fill="#000"/><rect x="357.2" y="120" width="2.8" height="1" fill="#000"/><rect x="748" y="504" width="1" height="2.8" fill="#000"/><rect x="357.2" y="115" width="2.8" height="1" fill="#000"/><rect x="754" y="504" width="1" height="2.8" fill="#000"/><rect x="357.2" y="109" width="2.8" height="1" fill="#000"/><rect x="759" y="504" width="1" height="4.7" fill="#000"/><rect x="355.3" y="104" width="4.7" height="1" fill="#000"/><rect x="764" y="504" width="1" height="2.8" fill="#000"/><rect x="357.2" y="99" width="2.8" height="1" fill="#000"/><rect x="769" y="504" width="1" height="2.8" fill="#000"/><rect x="357.2" y="94" width="2.8" height="1" fill="#000"/><rect x="774" y="504" width="1" height="2.8" fill="#000"/><rect x="357.2" y="89" width="2.8" height="1" fill="#000"/><rect x="779" y="504" width="1" height="2.8" fill="#000"/><rect x="357.2" y="84" width="2.8" height="1" fill="#000"/><rect x="784" y="504" width="1" height="7" fill="#000"/><rect x="353" y="79" width="7" height="1" fill="#000"/><rect x="789" y="504" width="1" height="2.8" fill="#000"/><rect x="357.2" y="74" width="2.8" height="1" fill="#000"/><rect x="794" y="504" width="1" height="2.8" fill="#000"/><rect x="357.2" y="69" width="2.8" height="1" fill="#000"/><rect x="799" y="504" width="1" height="2.8" fill="#000"/><rect x="357.2" y="64" width="2.8" height="1" fill="#000"/><text x="379.4" y="521.5" font-size="10" text-anchor="middle" stroke="#000" stroke-width="0.3">-0.4</text><text transform="translate(343.2,484.2) rotate(90)" font-size="10" text-anchor="middle" stroke="#000" stroke-width="0.3">-0.4</text><text x="430.0" y="521.5" font-size="10" text-anchor="middle" stroke="#000" stroke-width="0.3">-0.3</text><text transform="translate(343.2,433.6) rotate(90)" font-size="10" text-anchor="middle" stroke="#000" stroke-width="0.3">-0.3</text><text x="480.6" y="521.5" font-size="10" text-anchor="middle" stroke="#000" stroke-width="0.3">-0.2</text><text transform="translate(343.2,383.0) rotate(90)" font-size="10" text-anchor="middle" stroke="#000" stroke-width="0.3">-0.2</text><text x="531.2" y="521.5" font-size="10" text-anchor="middle" stroke="#000" stroke-width="0.3">-0.1</text><text transform="translate(343.2,332.4) rotate(90)" font-size="10" text-anchor="middle" stroke="#000" stroke-width="0.3">-0.1</text><text x="581.8" y="521.5" font-size="10" text-anchor="middle" stroke="#000" stroke-width="0.3">0.0</text><text transform="translate(343.2,281.8) rotate(90)" font-size="10" text-anchor="middle" stroke="#000" stroke-width="0.3">0.0</text><text x="632.4" y="521.5" font-size="10" text-anchor="middle" stroke="#000" stroke-width="0.3">0.1</text><text transform="translate(343.2,231.2) rotate(90)" font-size="10" text-anchor="middle" stroke="#000" stroke-width="0.3">0.1</text><text x="683.0" y="521.5" font-size="10" text-anchor="middle" stroke="#000" stroke-width="0.3">0.2</text><text transform="translate(343.2,180.6) rotate(90)" font-size="10" text-anchor="middle" stroke="#000" stroke-width="0.3">0.2</text><text x="733.6" y="521.5" font-size="10" text-anchor="middle" stroke="#000" stroke-width="0.3">0.3</text><text transform="translate(343.2,130.0) rotate(90)" font-size="10" text-anchor="middle" stroke="#000" stroke-width="0.3">0.3</text><text x="784.2" y="521.5" font-size="10" text-anchor="middle" stroke="#000" stroke-width="0.3">0.4</text><text transform="translate(343.2,79.4) rotate(90)" font-size="10" text-anchor="middle" stroke="#000" stroke-width="0.3">0.4</text><path d="M347.2 61 L341.4 67.4 H352.8 Z M347 502.6 L341.4 496.5 H352.4 Z M362.2 517.3 L368.5 511.6 V522.8 Z M800.2 517.3 L794 511.6 V522.8 Z" fill="none" stroke="#000" stroke-width="1.2"/><circle cx="581.5" cy="281.5" r="151.79999999999998" fill="#22782f"/><circle cx="581.5" cy="281.5" r="136.62" fill="none" stroke="#6e6e1c" stroke-width="10.12"/><path d="M465.12 281.5 A116.38 116.38 0 0 1 697.88 281.5" fill="none" stroke="#6e6e1c" stroke-width="10.12"/><path d="M568.2 160.8 A121.4 121.4 0 0 1 595.0 160.8 L595.0 171.0 A111.3 111.3 0 0 0 568.2 171.0 Z" fill="#000"/><path d="M571.38 281.5 A10.12 10.12 0 0 1 591.62 281.5" fill="none" stroke="#04140a" stroke-width="1.25"/><path d="M571.38 281.5 A10.12 10.12 0 0 0 591.62 281.5" fill="none" stroke="#e63323" stroke-width="1.25"/><path d="M561.26 281.5 A20.24 20.24 0 0 1 601.74 281.5" fill="none" stroke="#04140a" stroke-width="1.25"/><path d="M561.26 281.5 A20.24 20.24 0 0 0 601.74 281.5" fill="none" stroke="#e63323" stroke-width="1.25"/><path d="M551.14 281.5 A30.36 30.36 0 0 1 611.86 281.5" fill="none" stroke="#04140a" stroke-width="1.25"/><path d="M551.14 281.5 A30.36 30.36 0 0 0 611.86 281.5" fill="none" stroke="#e63323" stroke-width="1.25"/><path d="M541.02 281.5 A40.48 40.48 0 0 1 621.98 281.5" fill="none" stroke="#04140a" stroke-width="1.25"/><path d="M541.02 281.5 A40.48 40.48 0 0 0 621.98 281.5" fill="none" stroke="#e63323" stroke-width="1.25"/><path d="M530.90 281.5 A50.60 50.60 0 0 1 632.10 281.5" fill="none" stroke="#04140a" stroke-width="1.25"/><path d="M530.90 281.5 A50.60 50.60 0 0 0 632.10 281.5" fill="none" stroke="#e63323" stroke-width="1.25"/><path d="M520.78 281.5 A60.72 60.72 0 0 1 642.22 281.5" fill="none" stroke="#04140a" stroke-width="1.25"/><path d="M520.78 281.5 A60.72 60.72 0 0 0 642.22 281.5" fill="none" stroke="#e63323" stroke-width="1.25"/><path d="M510.66 281.5 A70.84 70.84 0 0 1 652.34 281.5" fill="none" stroke="#04140a" stroke-width="1.25"/><path d="M510.66 281.5 A70.84 70.84 0 0 0 652.34 281.5" fill="none" stroke="#e63323" stroke-width="1.25"/><path d="M500.54 281.5 A80.96 80.96 0 0 1 662.46 281.5" fill="none" stroke="#04140a" stroke-width="1.25"/><path d="M500.54 281.5 A80.96 80.96 0 0 0 662.46 281.5" fill="none" stroke="#e63323" stroke-width="1.25"/><path d="M490.42 281.5 A91.08 91.08 0 0 1 672.58 281.5" fill="none" stroke="#04140a" stroke-width="1.25"/><path d="M490.42 281.5 A91.08 91.08 0 0 0 672.58 281.5" fill="none" stroke="#e63323" stroke-width="1.25"/><path d="M480.30 281.5 A101.20 101.20 0 0 1 682.70 281.5" fill="none" stroke="#04140a" stroke-width="1.25"/><path d="M480.30 281.5 A101.20 101.20 0 0 0 682.70 281.5" fill="none" stroke="#e63323" stroke-width="1.25"/><path d="M470.18 281.5 A111.32 111.32 0 0 1 692.82 281.5" fill="none" stroke="#04140a" stroke-width="1.25"/><path d="M470.18 281.5 A111.32 111.32 0 0 0 692.82 281.5" fill="none" stroke="#e63323" stroke-width="1.25"/><path d="M460.06 281.5 A121.44 121.44 0 0 1 702.94 281.5" fill="none" stroke="#04140a" stroke-width="1.25"/><path d="M460.06 281.5 A121.44 121.44 0 0 0 702.94 281.5" fill="none" stroke="#e63323" stroke-width="1.25"/><path d="M449.94 281.5 A131.56 131.56 0 0 1 713.06 281.5" fill="none" stroke="#04140a" stroke-width="1.25"/><path d="M449.94 281.5 A131.56 131.56 0 0 0 713.06 281.5" fill="none" stroke="#e63323" stroke-width="1.25"/><path d="M439.82 281.5 A141.68 141.68 0 0 1 723.18 281.5" fill="none" stroke="#04140a" stroke-width="1.25"/><path d="M439.82 281.5 A141.68 141.68 0 0 0 723.18 281.5" fill="none" stroke="#e63323" stroke-width="1.25"/><path d="M429.70 281.5 A151.80 151.80 0 0 1 733.30 281.5" fill="none" stroke="#04140a" stroke-width="1.25"/><path d="M429.70 281.5 A151.80 151.80 0 0 0 733.30 281.5" fill="none" stroke="#e63323" stroke-width="1.25"/><rect x="429.2" y="280.6" width="304.6" height="1.7" fill="#e63323"/><circle cx="581.5" cy="281.5" r="2.4" fill="#e63323"/><rect x="566" y="143.4" width="31" height="5" fill="#000"/><rect x="565.2" y="414.4" width="32" height="6.7" fill="#000"/></svg>
<div class="a" style="left:154px;top:525px;width:648px;height:1px;background:#ffffff"></div>
<div class="a" style="left:177px;top:540px;width:138px;height:52px;border:1px solid;border-color:#ffffff #737890 #737890 #ffffff"></div>
<div class="t" style="left:187px;top:543px;transform:scaleX(0.8726);">Angle (deg):</div>
<div class="sunk" style="left:187px;top:557px;width:75px;height:20px;background:#fff"></div>
<div class="t" style="left:190px;top:561px;transform:scaleX(0.9270);">180.00</div>
<div class="btn" style="left:262px;top:557px;width:18px;height:10px"></div><div class="btn" style="left:262px;top:567px;width:18px;height:10px"></div>
<svg class="a" style="left:267.5px;top:560.5px" width="7" height="13" viewBox="0 0 7 13"><path d="M0 3.5 L3.5 0 L7 3.5Z M0 9.2 L3.5 12.7 L7 9.2Z" fill="#000"/></svg>
<div class="a" style="left:337px;top:546px;width:465px;height:109px;border:1px solid;border-color:#ffffff #16161e #16161e #ffffff;box-shadow:inset -1px -1px 0 #737890"></div>
<div class="a" style="left:337px;top:527px;width:106px;height:21px;background:#cec5c7;border-left:1px solid #ffffff;border-right:1px solid #16161e"></div>
<div class="a" style="left:443px;top:529px;width:96px;height:17px;border-left:1px solid #ffffff;border-top:1px solid #ffffff;border-right:1px solid #16161e;box-shadow:inset -1px 0 0 #737890"></div>
<div class="a" style="left:540px;top:529px;width:100px;height:17px;border-left:1px solid #ffffff;border-top:1px solid #ffffff;border-right:1px solid #16161e;box-shadow:inset -1px 0 0 #737890"></div>
<div class="t" style="left:345.4px;top:530px;transform:scaleX(0.9082);">Section Data</div>
<div class="t" style="left:447.3px;top:532px;transform:scaleX(0.8775);">Structural Part</div>
<div class="t" style="left:545.2px;top:532px;transform:scaleX(0.8894);">Non Structural Part</div>
<div class="t" style="left:345.2px;top:563px;transform:scaleX(0.8698);">Str. Area (m<sup>2</sup>):</div>
<div class="fld" style="left:430px;top:559px;width:69px"></div>
<div class="t" style="left:433.8px;top:561px;transform:scaleX(0.8735);">0.2827</div>
<div class="t" style="left:345.2px;top:587px;transform:scaleX(0.8772);">NStr. Area (m<sup>2</sup>):</div>
<div class="fld" style="left:430px;top:583px;width:69px"></div>
<div class="t" style="left:433.8px;top:585px;transform:scaleX(0.8735);">0.0000</div>
<div class="t" style="left:345.2px;top:611px;transform:scaleX(0.8909);">Total Area (m<sup>2</sup>):</div>
<div class="fld" style="left:430px;top:607px;width:69px"></div>
<div class="t" style="left:433.8px;top:609px;transform:scaleX(0.8735);">0.2827</div>
<div class="t" style="left:522.6px;top:559px;transform:scaleX(0.8299);">Cg<span style="position:relative;top:2px">x</span> (m):</div>
<div class="t" style="left:522.6px;top:583px;transform:scaleX(0.8299);">Cg<span style="position:relative;top:2px">y</span> (m):</div>
<div class="fld" style="left:576px;top:559px;width:69px"></div>
<div class="fld" style="left:576px;top:583px;width:69px"></div>
<div class="t" style="left:579.2px;top:561px;transform:scaleX(0.9008);">0.000</div>
<div class="t" style="left:579.2px;top:585px;transform:scaleX(0.9008);">0.000</div>
<div class="t" style="left:522.6px;top:610px;transform:scaleX(0.8417);">Color:</div>
<div class="a" style="left:576px;top:607px;width:69px;height:18px;background:#e63323;border:1px solid;border-color:#737890 #ffffff #ffffff #737890"></div>
<div class="t" style="left:522.6px;top:632px;transform:scaleX(0.9117);">Show Cg</div>
<div class="sunk" style="left:631px;top:632px;width:13px;height:13px;background:#fff"></div>
<svg class="a" style="left:634px;top:635px" width="7" height="7" viewBox="0 0 7 7"><path d="M0 2 L2.5 4.5 L7 0 V2.5 L2.5 7 L0 4.5Z" fill="#000"/></svg>
<div class="a" style="left:154px;top:655px;width:648px;height:1px;background:#ffffff"></div>
<div class="btn" style="left:508px;top:663px;width:70px;height:23px"></div>
<div class="t" style="left:527.5px;top:669px;transform:scaleX(0.9022);"><u>C</u>ancel</div>
<div class="btn" style="left:581px;top:663px;width:70px;height:23px"></div>
<div class="t" style="left:601.6px;top:669px;transform:scaleX(0.9053);"><u>D</u>elete</div>
<div class="btn" style="left:654px;top:663px;width:70px;height:23px"></div>
<div class="t" style="left:678.8px;top:669px;transform:scaleX(0.9312);"><u>N</u>ew</div>
<div class="btn" style="left:727px;top:663px;width:70px;height:23px"></div>
<div class="t" style="left:754.8px;top:669px;transform:scaleX(0.9116);"><u>O</u>K</div>
<div class="sb" style="left:4px;width:148px"></div>
<div class="sb" style="left:154px;width:277px"></div>
<div class="sb" style="left:432px;width:97px"></div>
<div class="sb" style="left:530px;width:114px"></div>
<div class="sb" style="left:645px;width:200px"></div>
<svg class="a" style="left:833px;top:701px" width="12" height="12" viewBox="0 0 12 12"><path d="M11 1 L1 11 M11 5 L5 11 M11 9 L9 11" stroke="#50525f" stroke-width="1.4"/><path d="M11 2 L2 11 M11 6 L6 11 M11 10 L10 11" stroke="#ffffff" stroke-width="1"/></svg>
</body></html>
